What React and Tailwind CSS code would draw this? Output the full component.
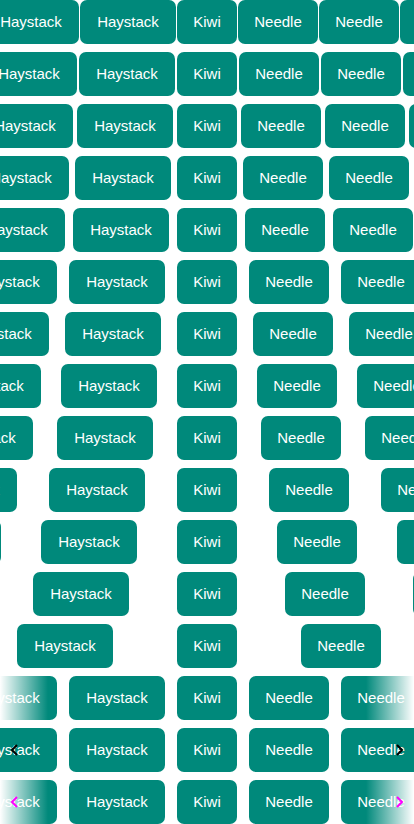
import React from 'react';

const rows = [
    { gap: 'gap-px' },
    { gap: 'gap-0.5' },
    { gap: 'gap-1' },
    { gap: 'gap-1.5' },
    { gap: 'gap-2' },
    { gap: 'gap-3' },
    { gap: 'gap-4' },
    { gap: 'gap-5' },
    { gap: 'gap-6' },
    { gap: 'gap-8' },
    { gap: 'gap-10' },
    { gap: 'gap-12' },
    { gap: 'gap-16' },
    { gap: 'gap-3', fade: true },
    { gap: 'gap-3', arrows: 'text-black' },
    { gap: 'gap-3', fade: true, arrows: 'text-[#ff00ff]' },
];

function Chip({ label, width }) {
    return (
        <div className={`flex h-11 shrink-0 items-center justify-center rounded-[7px] bg-[#00897b] text-[15px] text-white ${width}`}>
            {label}
        </div>
    );
}

function Chevron({ dir }) {
    return (
        <svg width="8" height="12" viewBox="0 0 8 12" fill="none" stroke="currentColor" strokeWidth="2">
            {dir === 'left' ? <polyline points="7,1 2,6 7,11" /> : <polyline points="1,1 6,6 1,11" />}
        </svg>
    );
}

function Row({ gap, fade, arrows }) {
    return (
        <div className="relative h-11 overflow-hidden">
            <div className={`grid h-full grid-cols-[minmax(0,1fr)_auto_minmax(0,1fr)] ${gap}`}>
                <div className={`flex justify-end ${gap}`}>
                    <Chip label="Haystack" width="w-24" />
                    <Chip label="Haystack" width="w-24" />
                    <Chip label="Haystack" width="w-24" />
                </div>
                <Chip label="Kiwi" width="w-15" />
                <div className={`flex justify-start ${gap}`}>
                    <Chip label="Needle" width="w-20" />
                    <Chip label="Needle" width="w-20" />
                    <Chip label="Needle" width="w-20" />
                </div>
            </div>
            {fade && (
                <>
                    <div className="pointer-events-none absolute left-0 top-0 h-full w-12 bg-linear-to-r from-white to-transparent" />
                    <div className="pointer-events-none absolute right-0 top-0 h-full w-12 bg-linear-to-l from-white to-transparent" />
                </>
            )}
            {arrows && (
                <>
                    <div className={`absolute left-[10px] top-1/2 -translate-y-1/2 ${arrows}`}>
                        <Chevron dir="left" />
                    </div>
                    <div className={`absolute right-[10px] top-1/2 -translate-y-1/2 ${arrows}`}>
                        <Chevron dir="right" />
                    </div>
                </>
            )}
        </div>
    );
}

export default function App() {
    return (
        <div className="flex w-[414px] flex-col gap-2 bg-white font-['Liberation_Sans',Arial,sans-serif]">
            {rows.map((r, i) => (
                <Row key={i} {...r} />
            ))}
        </div>
    );
}
